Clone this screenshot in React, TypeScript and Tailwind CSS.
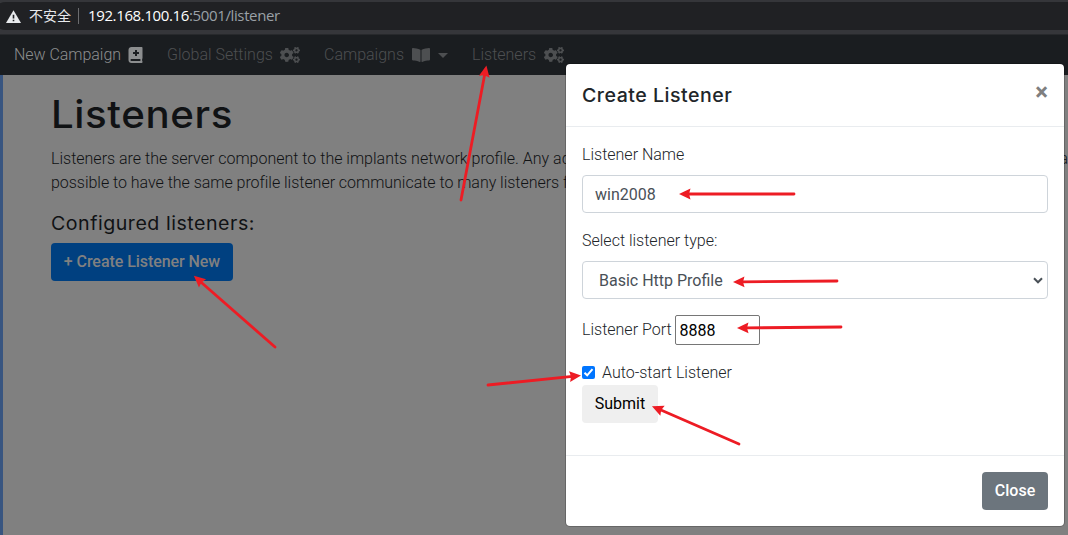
import React from "react";
import { FaBookMedical, FaBookOpen, FaCogs } from "react-icons/fa";

type Arrow = { from: [number, number]; to: [number, number] };

const arrows: Arrow[] = [
  { from: [461, 200], to: [486.5, 65] },
  { from: [275, 347], to: [193.5, 275.5] },
  { from: [794, 194], to: [678.5, 194] },
  { from: [837, 281], to: [732.5, 282] },
  { from: [841, 327], to: [736.5, 328] },
  { from: [488, 385], to: [581.5, 375.5] },
  { from: [739, 444], to: [651.5, 406] },
];

function ArrowMark({ from, to }: Arrow) {
  const dx = from[0] - to[0];
  const dy = from[1] - to[1];
  const length = Math.hypot(dx, dy);
  const angle = (Math.atan2(dy, dx) * 180) / Math.PI;
  return (
    <g transform={`translate(${to[0]} ${to[1]}) rotate(${angle})`}>
      <line x1="9" y1="0" x2={length} y2="0" stroke="#ed1c24" strokeWidth="2.8" strokeLinecap="round" />
      <path d="M0.500 0 L12 -5.400 L10.500 0 L12 5.400 Z" fill="#ed1c24" />
    </g>
  );
}

function AddressBar() {
  return (
    <div className="h-[34px] bg-[#35363a] pt-0.5">
      <div className="-ml-2 flex h-7 items-center rounded-l-full bg-[#202124] pl-[14px] text-[14px] whitespace-nowrap">
        <svg className="h-[13px] w-[15px] shrink-0" viewBox="0 0 15 13">
          <path d="M7.500 0.300 15 13H0Z" fill="#e8eaed" />
          <path d="M6.700 4.800h1.600v3.800H6.700zM6.700 9.700h1.600v1.600H6.700z" fill="#202124" />
        </svg>
        <span className="ml-2 w-[42px] pb-0.5 font-['Noto_Sans_CJK_SC',sans-serif] text-[#e8eaed]">不安全</span>
        <span className="ml-[7px] h-4 w-px bg-[#6b6c6f]" />
        <span className="ml-[9px] pb-[3px] font-['Open_Sans',sans-serif] text-[15px] tracking-[-0.37px] text-[#9aa0a6]">
          <span className="text-white">192.168.100.16</span>:5001/listener
        </span>
      </div>
    </div>
  );
}

function NavBar() {
  return (
    <nav className="flex h-[41px] items-center border-t border-[#27292c] bg-[#1a1d20] pl-[14px] leading-6 font-light whitespace-nowrap text-[#4d4f51]">
      <div className="flex w-[153px] items-center text-[#8c8e8f]">
        <span className="tracking-[-0.04px]">New Campaign</span>
        <FaBookMedical className="ml-[7px] h-4 w-[15px]" />
      </div>
      <div className="flex w-[157px] items-center">
        <span className="w-[105px]">Global Settings</span>
        <FaCogs className="ml-2 h-4 w-5" />
      </div>
      <div className="flex w-[148px] items-center">
        <span>Campaigns</span>
        <FaBookOpen className="ml-2 h-4 w-[18px]" />
        <span className="ml-2 border-x-[5px] border-t-[5px] border-x-transparent border-t-[#4d4f51]" />
      </div>
      <div className="flex items-center">
        <span>Listeners</span>
        <FaCogs className="ml-2 h-4 w-5" />
      </div>
    </nav>
  );
}

function CreateListenerModal() {
  return (
    <section className="absolute top-[63px] left-[565px] w-[500px] rounded-[5px] border border-black/20 bg-white bg-clip-padding text-[#212529]">
      <header className="flex h-[63px] items-start justify-between border-b border-[#e9ecef] p-4">
        <h5 className="origin-left scale-x-[1.06] pt-px font-[Inter,sans-serif] text-[18.500px] leading-[29px] font-medium tracking-[0.450px]">
          Create Listener
        </h5>
        <button className="-mt-[3px] font-['Roboto',sans-serif] text-[24px] leading-[30px] font-bold text-[#7f7f7f]">×</button>
      </header>
      <div className="flex flex-col p-4 font-light">
        <label className="mb-2">Listener Name</label>
        <input
          className="mb-4 h-[38px] rounded border border-[#ced4da] bg-white px-3 font-normal text-[#495057]"
          defaultValue="win2008"
        />
        <label className="mb-2">Select listener type:</label>
        <div className="mb-4 flex h-[38px] items-center justify-between rounded border border-[#ced4da] pr-1 pl-4 font-normal text-[#495057]">
          <span className="pt-0.5">Basic Http Profile</span>
          <svg className="h-[7px] w-[10px]" viewBox="0 0 10 7" fill="none">
            <path d="M1 1.300 5 5.300 9 1.300" stroke="#495057" strokeWidth="2" />
          </svg>
        </div>
        <div className="mb-4 flex h-[30px] items-center gap-[3px]">
          <label>Listener Port</label>
          <input
            className="h-[30px] w-[85px] rounded-[2px] border border-[#767676] bg-white px-1 font-normal text-black"
            defaultValue="8888"
          />
        </div>
        <label className="flex items-center">
          <span className="mr-[7px] mb-px flex size-[13px] items-center justify-center rounded-[2px] bg-[#0075ff]">
            <svg className="size-[11px]" viewBox="0 0 11 11" fill="none">
              <path d="M1.500 5.700 4.200 8.300 9.500 2.200" stroke="white" strokeWidth="2" />
            </svg>
          </span>
          Auto-start Listener
        </label>
        <button className="mb-4 h-[38px] w-[76px] rounded bg-[#efefef] font-normal text-black">Submit</button>
      </div>
      <footer className="flex justify-end border-t border-[#e9ecef] p-4">
        <button className="h-[38px] w-[66px] rounded bg-[#6c757d] font-medium text-white">Close</button>
      </footer>
    </section>
  );
}

export default function App() {
  return (
    <div className="relative flex h-[535px] w-[1068px] flex-col overflow-hidden bg-[#808080] font-['Roboto',sans-serif] text-[16px] leading-6 text-[#101214]">
      <AddressBar />
      <NavBar />
      <main className="flex-1 border-l-[3px] border-[#385580] pt-[15px] pl-12">
        <h1 className="mb-[9px] origin-left scale-x-[1.06] font-[Inter,sans-serif] text-[38px] leading-[48px] font-medium tracking-[0.550px]">
          Listeners
        </h1>
        <div className="mb-4 font-light whitespace-nowrap">
          <p className="flex">
            <span className="w-[1013px]">Listeners are the server component to the implants network profile. Any ad</span>
            <span>a</span>
          </p>
          <p className="tracking-[-0.03px]">possible to have the same profile listener communicate to many listeners f</p>
        </div>
        <h5 className="mb-[9px] origin-left scale-x-[1.06] pt-px font-[Inter,sans-serif] text-[18.500px] leading-[22px] tracking-[0.480px]">
          Configured listeners:
        </h5>
        <button className="h-[38px] w-[182px] rounded bg-[#004080] font-medium tracking-[-0.06px] text-[#808080]">
          + Create Listener New
        </button>
      </main>
      <CreateListenerModal />
      <svg className="pointer-events-none absolute inset-0 h-[535px] w-[1068px]" viewBox="0 0 1068 535">
        {arrows.map((arrow) => (
          <ArrowMark key={arrow.from.join("-")} {...arrow} />
        ))}
      </svg>
    </div>
  );
}
